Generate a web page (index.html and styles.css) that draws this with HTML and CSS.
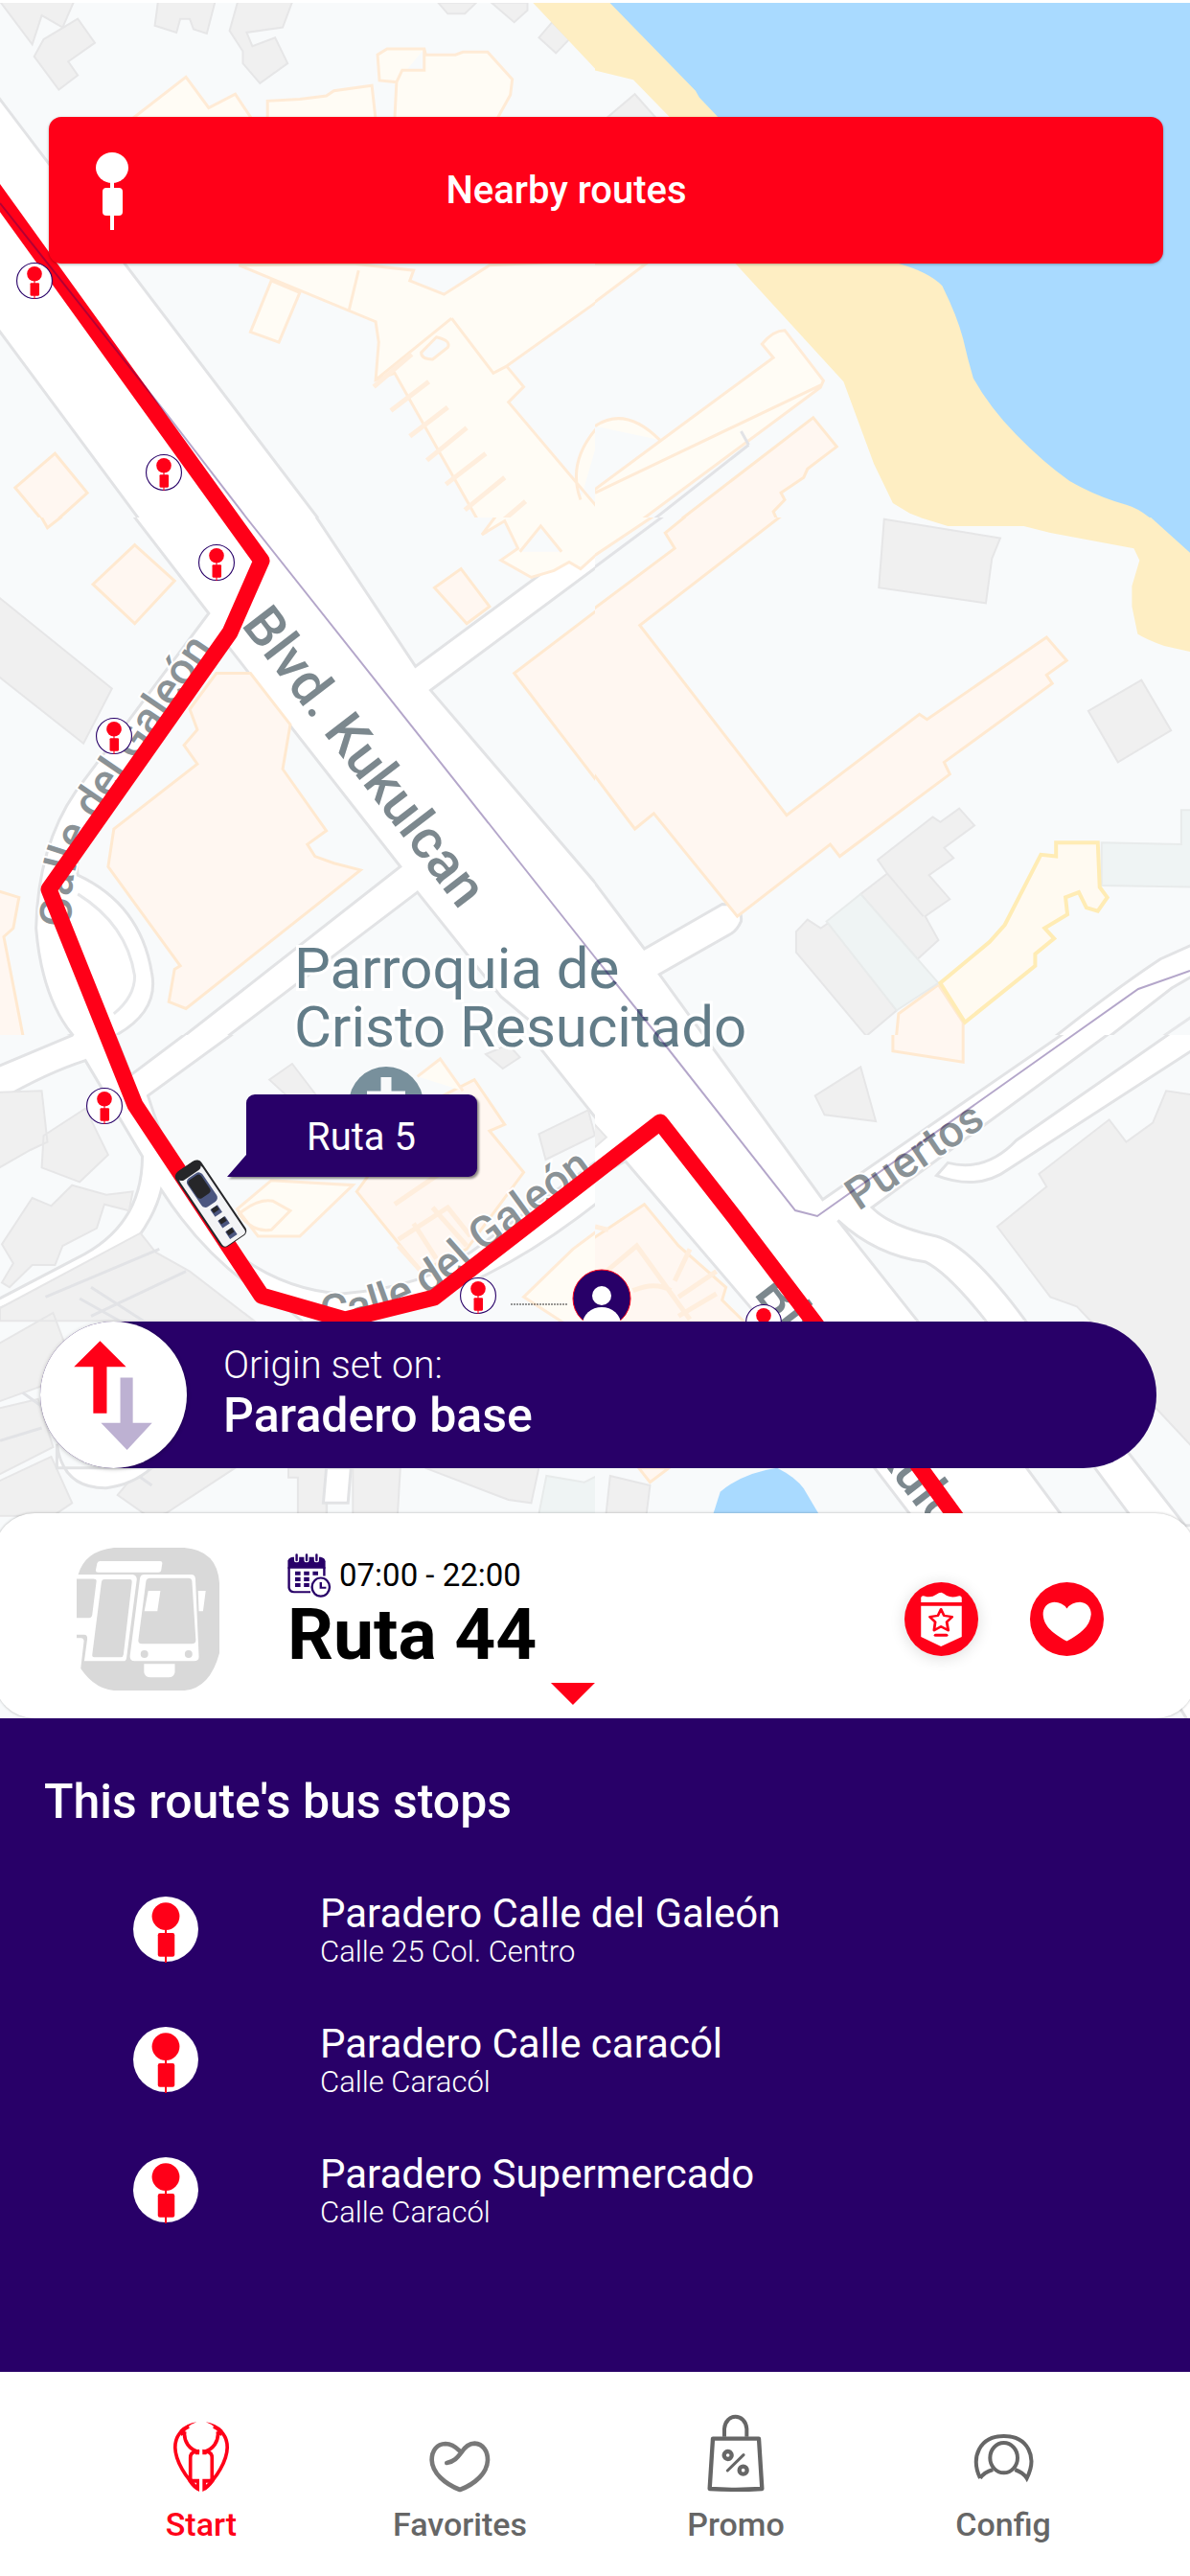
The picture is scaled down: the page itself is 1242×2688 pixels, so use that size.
FILE: index.html
```html
<!DOCTYPE html>
<html lang="en">
<head>
<meta charset="utf-8">
<meta name="viewport" content="width=device-width, initial-scale=1">
<title>Ruta 44</title>
<link rel="stylesheet" href="styles.css">
</head>
<body>
<svg class="defs" width="0" height="0" aria-hidden="true">
  <symbol id="signpost" viewBox="0 0 34 82">
    <ellipse cx="17" cy="17" rx="17" ry="16"/>
    <path d="M15 32h4v10h-4zM15 64h4v18h-4z"/>
    <rect x="7" y="38" width="21" height="29" rx="4"/>
  </symbol>
  <symbol id="stop" viewBox="-34 -34 68 68">
    <circle class="stop-disc" r="33"/>
    <g class="stop-sign">
      <circle cy="-13" r="14"/>
      <path d="M-1-2h2v36h-2z"/>
      <rect x="-8" y="4" width="17" height="24" rx="2"/>
    </g>
  </symbol>
</svg>

<div class="screen">
  <main class="stage">
    <svg class="map" viewBox="0 0 1242 1793" preserveAspectRatio="xMidYMin slice" role="img" aria-label="Route map">
      <!-- map tiles -->
      <svg width="621" height="540" viewBox="0 0 1568 1512" preserveAspectRatio="none">
        <path class="land" d="M0 0h1568v1512H0z"/>
        <path class="road" d="M-9 277 905 1612H430L-9 956z"/>
        <path class="grey" d="M-9-9 85 130l25-85 55 35L200-9zM90 165l25-50 90-60 45 70-70 55 25 40-50 42zM418-9l-10 84 57 20 10-40h25l10 30 35 13L570-9zM630-9l-25 99 35 60v35l45 58 73-58-33-75-60 25-15-40 95-15L775-9zM1155 8l25 32h45l30-32zM1295 8l60 57 35-35V8zM1420 110l35-45 45 50-35 40z"/>
        <path class="sand" d="M1390-9l178 209V-9z"/>
        <path class="cream" d="M345 350l145-125 60 90 70-40 45 75zM705 350v-55l85-5 70-10 20-15 100-15 10 100zM1040 350l5-110-45-5-5-75 25-17h98l4 17h78l20-8 65 0 65 80-5 45-35 70zM1045 240l15-35h58v-62M715 820l-55 150 75 30 55-145z"/>
        <path class="cream" d="M630 775l360 165 8 60-8 110 50-20 250 490h290v-90l-240-315 40-45-45-60 240-190V760l-285 15-120 85-90-40 10-30-160-20zM1190 930l110 160 35-20M945 790l-25 115M990 1110l200-180M1530 1460q-40-120 60-230M1110 1030l40-45q40 10 30 30l-40 35q-30 0-30-20z"/>
        <path class="comb" d="M985 1130l100-95M1030 1200l100-85M1080 1275l100-85M1125 1345l105-95M1175 1415l105-90M1225 1490l105-95M1275 1568l110-103"/>
        <path class="peach" d="M145 1325l85 115-102 102-88-117z"/>
      </svg>
      <svg x="621" width="621" height="540" viewBox="0 0 1568 1512" preserveAspectRatio="none">
        <path class="land" d="M0 0h1568v1512H0z"/>
        <path class="sand" d="M-9-9v212l110 30 94 107 175 430 285 345 35 105 45 135 50 115 45 30 70 30h740V-9z"/>
        <path class="water" d="M24-9l241 274 10 20 50 58 475 427q80 25 115 65 40 90 55 155 12 60 27 115Q1040 1190 1110 1270T1250 1405Q1320 1450 1400 1475 1450 1490 1515 1568L1600 1650V-9z"/>
        <path class="grey" d="M25 350l80-75 60 75z"/>
        <path class="cream" d="M-9 770h144L-9 890zM-9 1437 170 1290 470 1045l-30-40q30-40 60-40l102 147-8 20L0 1620-9 1600zM0 1440l595-315M0 1245q80-60 170 40"/>
        <path class="shade" d="M405 1300 60 1600M385 1260l20 40"/>
        <path class="peach" d="M130 1600l445-380 62 85-77 65-10 25-60 45 10 20-30 35 10 25-110 80z"/>
      </svg>
      <svg y="540" width="621" height="540" viewBox="0 0 1568 1512" preserveAspectRatio="none">
        <path class="road-fill" d="M0 0h1568v1512H0z"/>
        <path class="block" d="M-9-9h358l201 289-350 520Q100 960 95 1200q15 200 95 310L60 1568H-9zM600 375l455 645-645 560H290l20-70q110-70 90-180-30-200-195-285-10-60 50-150zM1100 1095l-570 480h980l-190-175zM829-9l266 444L1590 30V-9zM1590 130l-455 375 455 590z"/>
        <path class="edge" d="M205 1100q130 90 150 240 0 60-55 110"/>
        <path class="peach" d="M355 80l105 105-105 125-110-115zM105-9l20 39 45-39zM570 455h90l105 150-20 130 115 180-50 40 20 35 50 20 70 20-460 405-45-20 15-95 15-10L285 1020l15-110 220-190-35-55 35-45-20-60zM-9 1090l59 20-15 90-25 25 60 343H-9zM1215 150l75 110-60 50-85-105zM1590 257l-235 198 235 340z"/>
        <path class="cream" d="M1310-9l-40 59 60-40 35 80-45 35 80 50 60-20 40-25 30 20 60-60V-9zM1370 100l55-75 55 75"/>
        <path class="grey" d="M-9 228l304 272-75 160L-9 460z"/>
      </svg>
      <svg x="621" y="540" width="621" height="540" viewBox="0 0 1568 1512" preserveAspectRatio="none">
        <path class="land" d="M0 0h1568v1512H0z"/>
        <path class="road" d="M-9 1055l139 205 205-130q55 0 50 50-10 25-25 35l-190 120 170 260H-9z"/>
        <path class="sand" d="M830-9l100 34h200l70 20 220 45 15 35-20 75v60l15 80q20 15 70 35l80 20V-9z"/>
        <path class="water" d="M1456-9l134 134V-9z"/>
        <path class="cream" d="M-9-9h170L-9 117z"/>
        <path class="shade" d="M-9 152 186-9"/>
        <path class="peach" d="M-9 272 210 90l-25-45 60-54h251L118 315l387 555 350-295 20 15 315-240 53 68-53 42 15 25-285 230 15 35-290 240-25-35-245 210-220-300-50 45L-9 742zM905 1365l65 110v145H785l15-170z"/>
        <path class="grey" d="M762 5l306 55-22 60-16 130-282-45zM1300 565l140-90 78 147-140 93zM960 850l40 50-80 65 25 30-65 50 55 70-65 50 35 70-55 55-150-190 70-60-25-40 145-125 20 15zM530 1210l30-35 35 25 20-15 180 255-80 75-185-245zM770 1040l95 125"/>
        <path class="tint" d="M610 1180l90-80 205 260-110 80zM1335 950l210 5V855h40v225l-250-5z"/>
        <path class="gold" d="M1215 950h110l5 130 20 30-25 40-30-10-20-45-35 15 5 50-60 40 25 30-50 45v35L975 1475l-65-115 130-120 40-50 95-205 40 5z"/>
        <path class="road" d="M1590 1240l-100 50q-150 110-360 300l140 0 250-215 70-45z"/>
        <path class="edge" d="M1590 1445l-170 130M1590 1510l-110 80"/>
      </svg>
      <svg y="1080" width="621" height="713" viewBox="0 0 1568 2139" preserveAspectRatio="none">
        <path class="road-fill" d="M0 0h1568v2139H0z"/>
        <path class="block" d="M-9-9h204l-5 10L-9 100zM-9 210Q120 120 225 80l150 300q0 220-175 320L-9 830zM300-9h195L345 125zM425 485q135 250 335 375l100 100V2200H-9V860q310-160 369-220 50-80 65-155zM620-9L390 190q80 310 250 510 120 100 260 110 220-20 340-130L1590 380V290L1390-9zM800 900q400-10 800-400v1700H800z"/>
        <path class="grey" d="M-9 180l119-5 15 160-45 25-89 60zM225 230l60 145-75 85-100-45 5-100zM190 470l90 30 70-10-10 60-65-20-20 75-90 55-20 60-60 0-60 70-20-15 30-60-30-60 80-145 50 25zM370 620l40 60 90 60 170 155H0v-40zM710 140l60-50 90 140-40 30zM1420 310l130-75 18 80-130 75zM-9 970l149-100 60 190-209 90zM-9 1170l109-30 40 150-149 90zM-9 1400l144-80 55 145-50 40H-9zM310 1440l60-85h250l-180 140-40 20zM760 1355h100v230h-75v-200h-25zM930 1355h125l-15 300H930zM1120 1355h300l-20 110-60-10zM1280 60l60-30 30 40-45 35z"/>
        <path class="shade" d="M60 1120l340 290M210 825l180 120M240 790l210 160M120 820l300-150M0 1270l110-40M490 740l-250 140"/>
        <path class="road" d="M150 1280q15 140 130 138 70-10 120-63H150zM860 1355h65l-8 110h-65z"/>
        <path class="peach" d="M940 490l170 250 120-70 150-240-90-130 40-20-80-140-150 90z"/>
        <path class="cream" d="M1100 130l60-55 60 100M625 545l90-90 215 15-140 160H680zM630 560q50-50 90-40l45 30-50 60q-50 10-85-50zM1380 820l130-150 90-80v280l-90 50zM1510 670l80-70"/>
        <path class="comb" d="M1050 640l130-100 60 90M1050 660l60 80M1140 540l90 120M1040 530l160-130M1090 590l60 110"/>
        <path class="tint" d="M1420 1500l20-120 100 20 50-30v240h-170z"/>
      </svg>
      <svg x="621" y="1080" width="621" height="713" viewBox="0 0 1568 2139" preserveAspectRatio="none">
        <path class="road-fill" d="M0 0h1568v2139H0z"/>
        <path class="block" d="M280-9l320 524L1240-9zM1590-9h-230L730 540q50 60 170 90 90 30 235 265l420 640h40zM640 580l220 330 380 610 360 700h-180l0-700-390-625q-100-150-160-185-130-20-230-130zM-9 450l89-55 360 500 390 605 300 700H-9z"/>
        <path class="road" d="M1520-9 1110 330q-80 100-180 70l-30 40q110 50 190-20L1610 20V-9z"/>
        <path class="grey" d="M1505 175l-35 100-70 60-45-70-185 170 20 40-130 125 140 220 70 30 40 50 170 270 110 140V190zM580 190l120-90 40 170-135-20zM-9 270l39 50-39 40zM20 1600l20-220 105 30-20 190z"/>
        <path class="peach" d="M785-9h185v94L785 50z"/>
        <path class="peach" d="M-9 640l139-110 90 130 125 130-10 40 60 70H-9zM115 1355l30 45 50-45z"/>
        <path class="comb" d="M0 600l35 10M30 740l80-80 140 230M100 800q60-30 100 0M220 820l100-80M220 880l100-70M250 670l-40 100"/>
        <path class="water" d="M290 1580l40-150q60-60 150-75 50 30 70 65l80 160z"/>
      </svg>
      <path class="top-line" d="M0 0h1242v3H0z"/>

      <circle class="church" cx="403" cy="1152" r="39"/>
      <path class="church-cross" d="M403 1124v50M383 1144h40"/>
      <g class="place">
        <text x="307" y="1031">Parroquia de</text>
        <text x="307" y="1092">Cristo Resucitado</text>
      </g>
      <g class="street">
        <text class="avenue" transform="translate(251 652) rotate(52.5)">Blvd. Kukulcan</text>
        <text class="avenue" transform="translate(786 1350) rotate(52.5)">Blvd. Kukulcan</text>
        <path id="galeon-west" class="guide" d="M76 966Q68 905 104 850L246 642"/>
        <path id="galeon-south" class="guide" d="M336 1384Q430 1378 500 1310L680 1178"/>
        <text><textPath href="#galeon-west">Calle del Galeón</textPath></text>
        <text><textPath href="#galeon-south">Calle del Galeón</textPath></text>
        <text transform="translate(896 1264) rotate(-34)">Puertos</text>
      </g>

      <path class="route" d="M-12 190L273 585 240 660 51 928 141 1153 273 1352 360 1377 453 1354 689 1171 768 1272 850 1380 1010 1600"/>
      <path class="transfer" d="M0 212L174 432 257 540 621 999 686 1080 830 1263 853 1269 1120 1080 1188 1032 1242 1013"/>

      <g class="pins">
        <use href="#stop" x="17" y="274" width="38" height="38"/>
        <use href="#stop" x="152" y="474" width="38" height="38"/>
        <use href="#stop" x="207" y="568" width="38" height="38"/>
        <use href="#stop" x="100" y="749" width="38" height="38"/>
        <use href="#stop" x="90" y="1135" width="38" height="38"/>
        <use href="#stop" x="480" y="1333" width="38" height="38"/>
        <use href="#stop" x="778" y="1361" width="38" height="38"/>
      </g>
      <path class="walk" d="M533 1361h60"/>
      <g>
        <circle class="me" cx="628" cy="1355" r="30"/>
        <circle class="me-body" cx="628" cy="1352" r="10"/>
        <ellipse class="me-body" cx="628" cy="1382" rx="20" ry="18"/>
      </g>
      <g transform="translate(220 1256) rotate(-34)">
        <rect class="bus-edge" x="-16" y="-47" width="32" height="94" rx="6"/>
        <rect class="bus-body" x="-14" y="-40" width="28" height="86" rx="4"/>
        <rect class="bus-edge" x="-14" y="-47" width="28" height="11" rx="5"/>
        <rect class="bus-roof" x="-9" y="-35" width="19" height="36" rx="5"/>
        <rect class="bus-edge" x="-8" y="-33" width="16" height="23" rx="4"/>
        <path class="bus-roof" d="M-4 5h9v9h-9zM-4 19h9v9h-9zM-4 33h9v9h-9z"/>
        <path class="bus-edge" d="M-3 5h7v5h-7zM-3 19h7v5h-7zM-3 33h7v5h-7z"/>
      </g>
      <path class="bubble" d="M266 1142h223a9 9 0 0 1 9 9v68a9 9 0 0 1-9 9H237l20-23v-54a9 9 0 0 1 9-9z"/>
      <text class="bubble-text" x="377" y="1200">Ruta 5</text>
    </svg>

    <div class="overlay">
      <button class="nearby" type="button">
        <svg class="nearby-icon" aria-hidden="true"><use href="#signpost"/></svg>
        <span class="nearby-label">Nearby routes</span>
      </button>

      <section class="origin">
        <button class="swap" type="button" aria-label="Swap origin and destination">
          <svg viewBox="0 0 152 152" aria-hidden="true">
            <path fill="#ff0018" d="M62 20l27 27H69v48H55V47H35z"/>
            <path fill="#bdb1d2" d="M90 133L63 105h20V58h13v47h20z"/>
          </svg>
        </button>
        <div class="origin-text">
          <p class="origin-hint">Origin set on:</p>
          <p class="origin-name">Paradero base</p>
        </div>
      </section>

      <section class="card">
        <svg class="card-bus" viewBox="202 171 375 446" preserveAspectRatio="none" aria-hidden="true">
          <path fill="#d9d9d9" d="M202 255h4q18-74 94-84h185q86 8 92 110v219q-25 110-92 117H300q-60-7-98-90z"/>
          <g fill="#fff">
            <path d="M264 213h157q6 0 6 6l-3 23q-1 6-7 6H258q-6 0-6-6l4-23q2-6 8-6zM202 255h148q10 3 10 15l-27 245q-1 10-8 10H222l8-70q0-12-8-12h-20v-53h33q7 0 8-10l11-105q0-7-8-7h-44zM202 453h11q8 0 8 10l-9 92-10 60z"/>
            <path d="M380 255h123q10 0 11 13l9 244q0 13-13 13H355q-14 0-13-15l26-242q1-13 12-13zM521 306h20l-7 63h-11zM379 534h81v26q-2 16-17 16h-46q-16 0-18-16z"/>
          </g>
          <g fill="#d9d9d9">
            <path d="M275 270h67q6 0 5 10l-22 225q-1 8-7 8h-70q-6 0-5-8l24-225q1-10 8-10zM395 266h100q9 0 10 9l10 185q0 11-10 11H373q-10 0-9-11l20-183q1-11 11-11z"/>
            <ellipse cx="380" cy="503" rx="10" ry="12"/>
            <ellipse cx="496" cy="503" rx="10" ry="12"/>
          </g>
          <path fill="#fff" d="M390 306h32l-8 63h-34z"/>
        </svg>
        <div class="card-info">
          <p class="card-hours">
            <svg class="calendar" viewBox="765 183 115 135" preserveAspectRatio="none" fill="none" stroke="#280068" aria-hidden="true">
              <path fill="#280068" stroke="none" d="M766 229v-24q4-11 14-11h72q11 3 12 13v22z"/>
              <path stroke-width="6" d="M769 225v63q2 13 13 13h43M861 225v27"/>
              <path stroke="#fff" stroke-width="13" stroke-linecap="round" d="M789 184v20M815 184v20M841 184v20"/>
              <path stroke-width="6" stroke-linecap="round" d="M789 187v17M815 187v17M841 187v17"/>
              <path stroke-width="12" d="M785 244h14M808 244h14M831 244h14M785 262h14M808 262h14M785 280h14M808 280h14"/>
              <path stroke-width="6" d="M852 271v17h14"/>
              <ellipse cx="852" cy="286" rx="23" ry="28" stroke-width="6"/>
            </svg>
            <time>07:00 - 22:00</time>
          </p>
          <h1 class="card-title">Ruta 44</h1>
        </div>
        <div class="card-actions">
          <button class="round raised" type="button" aria-label="Rate route">
            <svg viewBox="818 270 192 230" preserveAspectRatio="none" aria-hidden="true">
              <path fill="#fff" d="M861 333v-15q1-7 9-5 17 7 30-4 8-7 14-7 6 2 14 10 14 8 30 1 8-2 9 5v15zM861 344h106v96l-54 30-52-30z"/>
              <path fill="none" stroke="#ff0018" stroke-width="7" stroke-linejoin="round" d="M913 354l8 20 21 4-14 16 4 26-19-12-18 12 3-26-14-16 21-4z"/>
              <path stroke="#ff0018" stroke-width="9" stroke-linecap="round" d="M899 435h28"/>
            </svg>
          </button>
          <button class="round" type="button" aria-label="Add to favorites">
            <svg viewBox="1148 270 192 230" preserveAspectRatio="none" aria-hidden="true">
              <path fill="#fff" d="M1244 352q-12-20-33-20c-19 2-29 18-29 38 2 40 28 60 62 84 34-24 60-44 63-84 0-20-10-36-29-38q-22 0-34 20z"/>
            </svg>
          </button>
        </div>
        <span class="expand" aria-hidden="true"></span>
      </section>
    </div>
  </main>

  <section class="stops">
    <h2 class="stops-title">This route's bus stops</h2>
    <ul class="stops-list">
      <li class="stops-item">
        <svg class="stops-icon" aria-hidden="true"><use href="#stop"/></svg>
        <div><p class="stops-name">Paradero Calle del Galeón</p><p class="stops-street">Calle 25 Col. Centro</p></div>
      </li>
      <li class="stops-item">
        <svg class="stops-icon" aria-hidden="true"><use href="#stop"/></svg>
        <div><p class="stops-name">Paradero Calle caracól</p><p class="stops-street">Calle Caracól</p></div>
      </li>
      <li class="stops-item">
        <svg class="stops-icon" aria-hidden="true"><use href="#stop"/></svg>
        <div><p class="stops-name">Paradero Supermercado</p><p class="stops-street">Calle Caracól</p></div>
      </li>
    </ul>
  </section>

  <nav class="tabs">
    <a class="tab active" href="#start" aria-current="page">
      <svg width="60" height="75" viewBox="249 134 180 226" fill="none" stroke="currentColor" stroke-width="11" aria-hidden="true">
        <path d="M300 152C270 166 257 190 257 218c1 42 33 96 72 130M378 152c30 14 43 38 43 66-1 42-33 96-72 130"/>
        <path d="M287 168c-4 30 14 58 46 64h-14q-14 3-14 18v68M391 168c4 30-14 58-46 64h14q14 3 14 18v68"/>
        <path fill="currentColor" stroke="none" d="M325 138q-30 4-54 26l6 18 8-6q6-26 40-38zM353 138q30 4 54 26l-6 18-8-6q-6-26-40-38zM333 224v16h-12l-6-12zM343 224v16h12l6-12z"/>
        <path fill="currentColor" fill-rule="evenodd" stroke="none" d="M300 306q4 11 14 11h19v40q-20-8-36-34zm13 23 11 8v-8zM378 306q-4 11-14 11h-21v40q20-8 38-34zm-13 23-11 8v-8z"/>
      </svg>
      Start
    </a>
    <a class="tab" href="#favorites">
      <svg width="64" height="54" viewBox="1046 190 192 162" fill="none" stroke="#787878" stroke-width="14" stroke-linecap="round" stroke-linejoin="round" aria-hidden="true">
        <path d="M1101 259c24-4 34-18 44-31 15-23 30-30 43-30 27 2 41 24 41 52-1 40-39 75-87 93-47-18-87-53-88-93 0-30 16-50 43-51 18 0 31 9 45 23"/>
      </svg>
      Favorites
    </a>
    <a class="tab" href="#promo">
      <svg width="60" height="82" viewBox="174 124 180 246" fill="none" stroke="currentColor" stroke-width="13" aria-hidden="true">
        <path stroke-linejoin="round" d="M192 201h144l10 157q-82 5-164 0z"/>
        <path stroke-width="12" d="M228 195v-25c4-50 66-50 70 0v25"/>
        <path stroke-width="9" stroke-linecap="round" d="M238 301l50-49"/>
        <circle cx="239" cy="253" r="12"/><circle cx="287" cy="300" r="12"/>
      </svg>
      Promo
    </a>
    <a class="tab" href="#config">
      <svg class="tab-user" width="63" height="52" viewBox="995 168 189 156" fill="none" stroke="currentColor" stroke-width="12" aria-hidden="true">
        <path d="M1016 309c-31-66-2-132 74-132s106 66 72 132q-10-17-37-27M1016 309q12-19 40-27"/>
        <ellipse cx="1090" cy="245" rx="43" ry="47"/>
      </svg>
      Config
    </a>
  </nav>
</div>
</body>
</html>
```
FILE: styles.css
```css
:root {
  --red: #ff0018;
  --purple: #280068;
  --grey: #666;
}

* { box-sizing: border-box; }

body {
  margin: 0;
  font-family: Roboto, "Liberation Sans", sans-serif;
  background: #fff;
}

h1, h2, p, ul { margin: 0; padding: 0; }
ul { list-style: none; }

button {
  border: 0;
  padding: 0;
  font: inherit;
  cursor: pointer;
}

.defs { position: absolute; }

.screen {
  display: flex;
  flex-direction: column;
  min-height: 100vh;
}

/* Map */
.stage {
  position: relative;
  display: flex;
  flex: 1;
  min-height: 900px;
  overflow: hidden;
}

.map {
  position: absolute;
  inset: 0;
  width: 100%;
  height: 100%;
  background: #f8fafb;
}

.map path { vector-effect: non-scaling-stroke; }
.land { fill: #f8fafb; }
.road-fill { fill: #fff; }
.road { fill: #fff; stroke: #e2e3e5; stroke-width: 3; }
.block { fill: #f8fafb; stroke: #e2e3e5; stroke-width: 3; }
.edge { fill: none; stroke: #e6e7e9; stroke-width: 3; }
.shade { fill: none; stroke: #e2e3e6; stroke-width: 3; }
.grey { fill: #f0f0f0; stroke: #e6e6e7; stroke-width: 2; }
.tint { fill: #eff4f4; stroke: #e8ebeb; stroke-width: 2; }
.sand { fill: #feeec3; }
.water { fill: #a9daff; }
.cream { fill: #fffcf5; stroke: #ffebd6; stroke-width: 3; }
.peach { fill: #fff7f1; stroke: #ffe9d0; stroke-width: 3; }
.comb { fill: none; stroke: #ffeedd; stroke-width: 5; }
.gold { fill: #fffaf1; stroke: #ffecb5; stroke-width: 4; }
.top-line { fill: #fff; }

.church { fill: #78909c; }
.church-cross { fill: none; stroke: #f8fafb; stroke-width: 11; }

.place text {
  font-size: 60px;
  fill: #627c88;
  stroke: #fff;
  stroke-width: 6px;
  paint-order: stroke;
}

.street text {
  font-size: 46px;
  font-weight: 500;
  fill: #8a9296;
  stroke: #fff;
  stroke-width: 4px;
  paint-order: stroke;
}
.street .avenue { font-size: 57px; fill: #7c888e; }
.guide { fill: none; }

.route {
  fill: none;
  stroke: var(--red);
  stroke-width: 17;
  stroke-linejoin: round;
}
.transfer {
  fill: none;
  stroke: var(--purple);
  stroke-opacity: .35;
  stroke-width: 2;
}

.stop-disc { fill: #fff; }
.stop-sign { fill: var(--red); stroke: none; }
.pins { stroke: var(--purple); stroke-width: 2; }

.walk { stroke: #333; stroke-width: 1; stroke-dasharray: 2 1; }
.me { fill: var(--purple); stroke: var(--red); }
.me-body { fill: #fff; }

.bus-edge { fill: #262629; }
.bus-body { fill: #f3f4f6; }
.bus-roof { fill: #4b5680; }

.bubble { fill: var(--purple); filter: drop-shadow(2px 2px 1px rgb(0 0 0 / 45%)); }
.bubble-text { font-size: 40px; fill: #fff; text-anchor: middle; }

.overlay {
  position: relative;
  display: flex;
  flex: 1;
  flex-direction: column;
  padding-top: 122px;
}

.nearby {
  display: flex;
  align-items: center;
  min-height: 153px;
  margin: 0 28px auto 51px;
  padding: 0 166px 0 49px;
  border-radius: 13px;
  background: var(--red);
  box-shadow: 0 1px 3px rgb(0 0 0 / 30%);
  color: #fff;
}
.nearby-icon { width: 34px; height: 82px; fill: #fff; }
.nearby-label {
  flex: 1;
  font-size: 40px;
  font-weight: 500;
}

/* Origin bar */
.origin {
  display: flex;
  align-items: center;
  gap: 38px;
  margin: 0 35px 47px 42px;
  border-radius: 77px;
  background: var(--purple);
  color: #fff;
}
.swap {
  width: 153px;
  height: 153px;
  border-radius: 50%;
  background: #fff;
  box-shadow: 0 1px 4px rgb(0 0 0 / 25%);
}
.swap svg { display: block; }
.origin-text { padding-bottom: 6px; }
.origin-hint { font-size: 40px; font-weight: 300; line-height: 48px; }
.origin-name { font-size: 50px; font-weight: 500; line-height: 56px; }

/* Route card */
.card {
  position: relative;
  display: flex;
  align-items: center;
  min-height: 214px;
  margin: 0 -6px;
  padding: 6px 96px 0 86px;
  border-radius: 42px;
  background: #fff;
  box-shadow: 0 0 3px rgb(0 0 0 / 30%);
}
.card-bus { width: 149px; height: 149px; }
.card-info { flex: 1; padding: 0 0 14px 71px; }
.card-hours {
  display: flex;
  align-items: center;
  gap: 8px;
  font-size: 33px;
  line-height: 46px;
}
.calendar { width: 46px; height: 46px; }
.card-title { font-size: 75px; font-weight: 700; line-height: 76px; }
.card-actions { display: flex; gap: 54px; }
.round {
  width: 77px;
  height: 77px;
  border-radius: 50%;
  background: var(--red);
}
.round svg { display: block; width: 77px; height: 77px; }
.raised { box-shadow: 0 2px 16px rgb(0 0 0 / 14%); }
.expand {
  position: absolute;
  bottom: 14px;
  left: 48%;
  width: 46px;
  height: 23px;
  margin-left: -21px;
  background: var(--red);
  clip-path: polygon(0 0, 100% 0, 50% 100%);
}

/* Stops */
.stops {
  padding: 57px 46px 150px;
  background: var(--purple);
  color: #fff;
}
.stops-title {
  margin-bottom: 63px;
  font-size: 50px;
  font-weight: 500;
  line-height: 60px;
}
.stops-list {
  display: flex;
  flex-direction: column;
  gap: 56px;
  padding-left: 92px;
}
.stops-item { display: flex; align-items: center; gap: 126px; }
.stops-icon { flex: none; width: 70px; height: 70px; }
.stops-name { font-size: 42px; line-height: 48px; }
.stops-street { font-size: 31px; font-weight: 300; line-height: 32px; }

/* Tab bar */
.tabs {
  display: grid;
  grid-template-columns: 270fr 270fr 306fr 252fr;
  height: 213px;
  padding: 0 69px 44px 75px;
  background: #fff;
}
.tab {
  display: flex;
  flex-direction: column;
  align-items: center;
  justify-content: flex-end;
  gap: 23px;
  color: var(--grey);
  font-size: 34px;
  font-weight: 500;
  line-height: 20px;
  text-decoration: none;
}
.tab-user { margin-bottom: 10px; }
.active { color: var(--red); }
```
